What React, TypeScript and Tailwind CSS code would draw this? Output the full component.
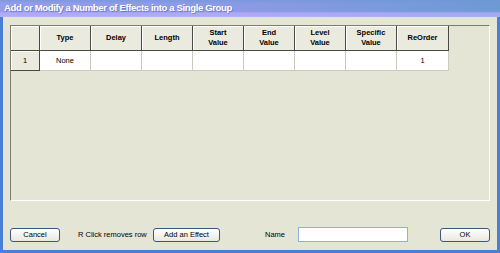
const COLUMNS = [
  ['Type'],
  ['Delay'],
  ['Length'],
  ['Start', 'Value'],
  ['End', 'Value'],
  ['Level', 'Value'],
  ['Specific', 'Value'],
  ['ReOrder'],
];

const ROW = ['None', '', '', '', '', '', '', '1'];

function XpButton({ label, width }: { label: string; width: string }) {
  return (
    <button
      className={`${width} h-[14px] rounded-[3px] border border-[#3d5878] bg-gradient-to-b from-white to-[#e9e9df] text-[7.5px] leading-none text-black`}
    >
      {label}
    </button>
  );
}

export default function App() {
  return (
    <div className="w-[500px] h-[253px] flex flex-col bg-[#4a7fd6] font-['Liberation_Sans',Arial,sans-serif] overflow-hidden">
      {/* title bar */}
      <div className="h-[17px] flex items-center pl-[4px] bg-[linear-gradient(to_bottom,rgba(110,150,215,0.6)_0%,rgba(255,255,255,0)_22%,rgba(255,255,255,0)_66%,rgba(190,175,255,0.7)_78%,rgba(190,175,255,0.7)_92%,rgba(230,230,255,0.4)_100%),linear-gradient(to_right,#969cec_0%,#8a9ae6_50%,#6c9bd3_100%)]">
        <span className="text-white font-bold text-[9.5px] tracking-[-0.35px] [text-shadow:1px_1px_0_rgba(40,60,140,0.35)]">
          Add or Modify a Number of Effects into a Single Group
        </span>
      </div>

      {/* body */}
      <div className="flex-1 flex flex-col ml-[3px] mr-[3px] mb-[3px] bg-[#e5e5d6] pt-[8px] px-[7px] pb-[8px]">
        {/* grid */}
        <div className="h-[176px] border-l border-t border-[#7c7c74] border-r border-b border-r-white border-b-white">
          <div className="grid grid-cols-[29px_repeat(7,51px)_52px] text-[7.5px] text-black">
            <div className="h-[25px] bg-[#eaeade] border-r border-b border-[#4a4a44] shadow-[inset_1px_1px_0_#fff]" />
            {COLUMNS.map((lines) => (
              <div
                key={lines.join(' ')}
                className="h-[25px] bg-[#eaeade] border-r border-b border-[#4a4a44] shadow-[inset_1px_1px_0_#fff] flex flex-col items-center justify-center font-bold leading-[10px]"
              >
                {lines.map((l) => (
                  <span key={l}>{l}</span>
                ))}
              </div>
            ))}

            <div className="h-[20px] bg-[#eaeade] border-r border-b border-[#4a4a44] shadow-[inset_1px_1px_0_#fff] flex items-center justify-center">
              1
            </div>
            {ROW.map((v, i) => (
              <div
                key={i}
                className="h-[20px] bg-white border-r border-b border-[#cbcbbd] flex items-center justify-center"
              >
                {v}
              </div>
            ))}
          </div>
        </div>

        <div className="flex-1" />

        {/* bottom bar */}
        <div className="h-[15px] flex items-center text-[7.5px] text-black">
          <XpButton label="Cancel" width="w-[50px]" />
          <span className="ml-[18px] w-[66px] whitespace-nowrap">R Click removes row</span>
          <span className="ml-[9px]">
            <XpButton label="Add an Effect" width="w-[67px]" />
          </span>
          <span className="ml-[45px] w-[18px]">Name</span>
          <input
            className="ml-[15px] w-[110px] h-[15px] border border-[#8fb0d8] bg-white outline-none"
            defaultValue=""
          />
          <span className="ml-auto">
            <XpButton label="OK" width="w-[50px]" />
          </span>
        </div>
      </div>
    </div>
  );
}
